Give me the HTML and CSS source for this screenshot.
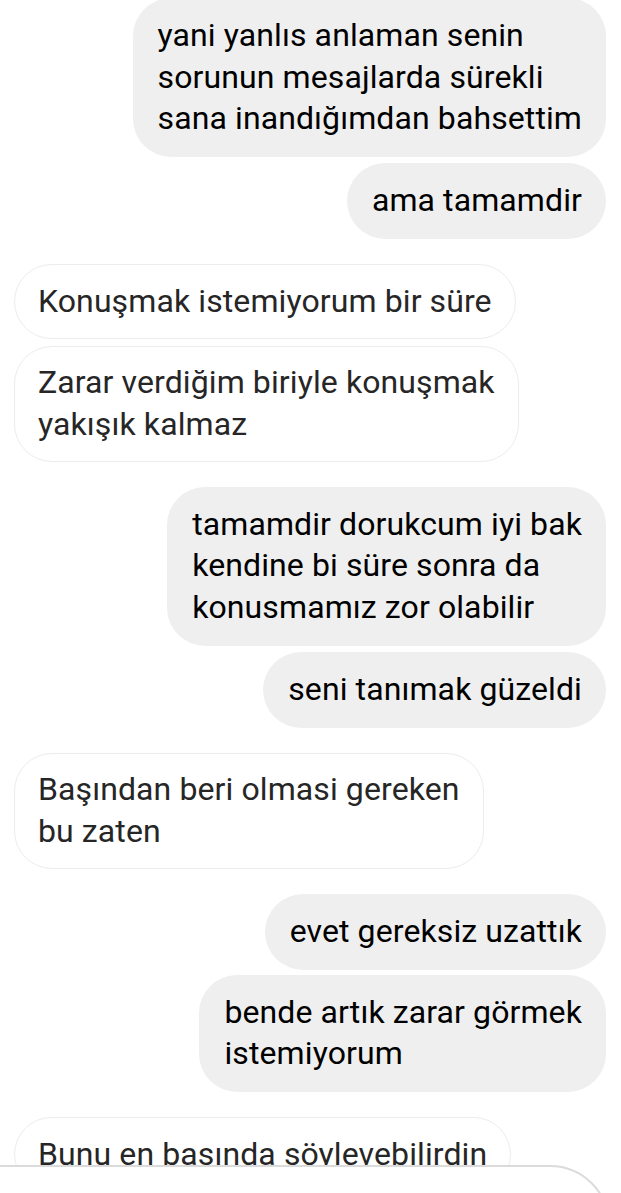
FILE: index.html
```html
<!DOCTYPE html>
<html lang="tr">
<head>
<meta charset="utf-8">
<title>Sohbet</title>
<link rel="stylesheet" href="styles.css">
</head>
<body>
<div class="screen">
  <div class="chat">
    <div class="group out first">
      <div class="bubble">yani yanlıs anlaman senin<br>sorunun mesajlarda sürekli<br>sana inandığımdan bahsettim</div>
      <div class="bubble">ama tamamdir</div>
    </div>
    <div class="group in">
      <div class="bubble">Konuşmak istemiyorum bir süre</div>
      <div class="bubble">Zarar verdiğim biriyle konuşmak<br>yakışık kalmaz</div>
    </div>
    <div class="group out">
      <div class="bubble">tamamdir dorukcum iyi bak<br>kendine bi süre sonra da<br>konusmamız zor olabilir</div>
      <div class="bubble">seni tanımak güzeldi</div>
    </div>
    <div class="group in">
      <div class="bubble">Başından beri olmasi gereken<br>bu zaten</div>
    </div>
    <div class="group out">
      <div class="bubble">evet gereksiz uzattık</div>
      <div class="bubble tight">bende artık zarar görmek<br>istemiyorum</div>
    </div>
    <div class="group in">
      <div class="bubble">Bunu en basında söylevebilirdin</div>
    </div>
  </div>
  <div class="composer"></div>
</div>
</body>
</html>
```

FILE: styles.css
```css
html, body {
  margin: 0;
  padding: 0;
  background: #ffffff;
}

.screen {
  position: relative;
  width: 621px;
  height: 1193px;
  overflow: hidden;
  font-family: Roboto, "Noto Sans", "Liberation Sans", sans-serif;
  font-size: 32px;
  line-height: 41.5px;
  letter-spacing: 0.1px;
}

.chat {
  display: flex;
  flex-direction: column;
  gap: 25px;
  padding: 0 15px 0 14px;
}

.group {
  display: flex;
  flex-direction: column;
  gap: 6px;
}

.group.first {
  margin-top: -2px;
}

.group.out {
  align-items: flex-end;
}

.group.in {
  align-items: flex-start;
  gap: 7px;
}

.bubble {
  white-space: nowrap;
  border-radius: 38px;
}

.out .bubble {
  background: #efefef;
  color: #000000;
  padding: 17.25px 24px 17.25px 25px;
}

.out .bubble.tight {
  margin-top: -1px;
}

.in .bubble {
  background: #ffffff;
  color: #262626;
  border: 1.5px solid #ececec;
  padding: 15.5px 23px;
}

.composer {
  position: absolute;
  top: 1165px;
  left: -80px;
  right: 11px;
  height: 140px;
  background: #ffffff;
  border: 2px solid #dbdbdb;
  border-radius: 60px;
}
```
